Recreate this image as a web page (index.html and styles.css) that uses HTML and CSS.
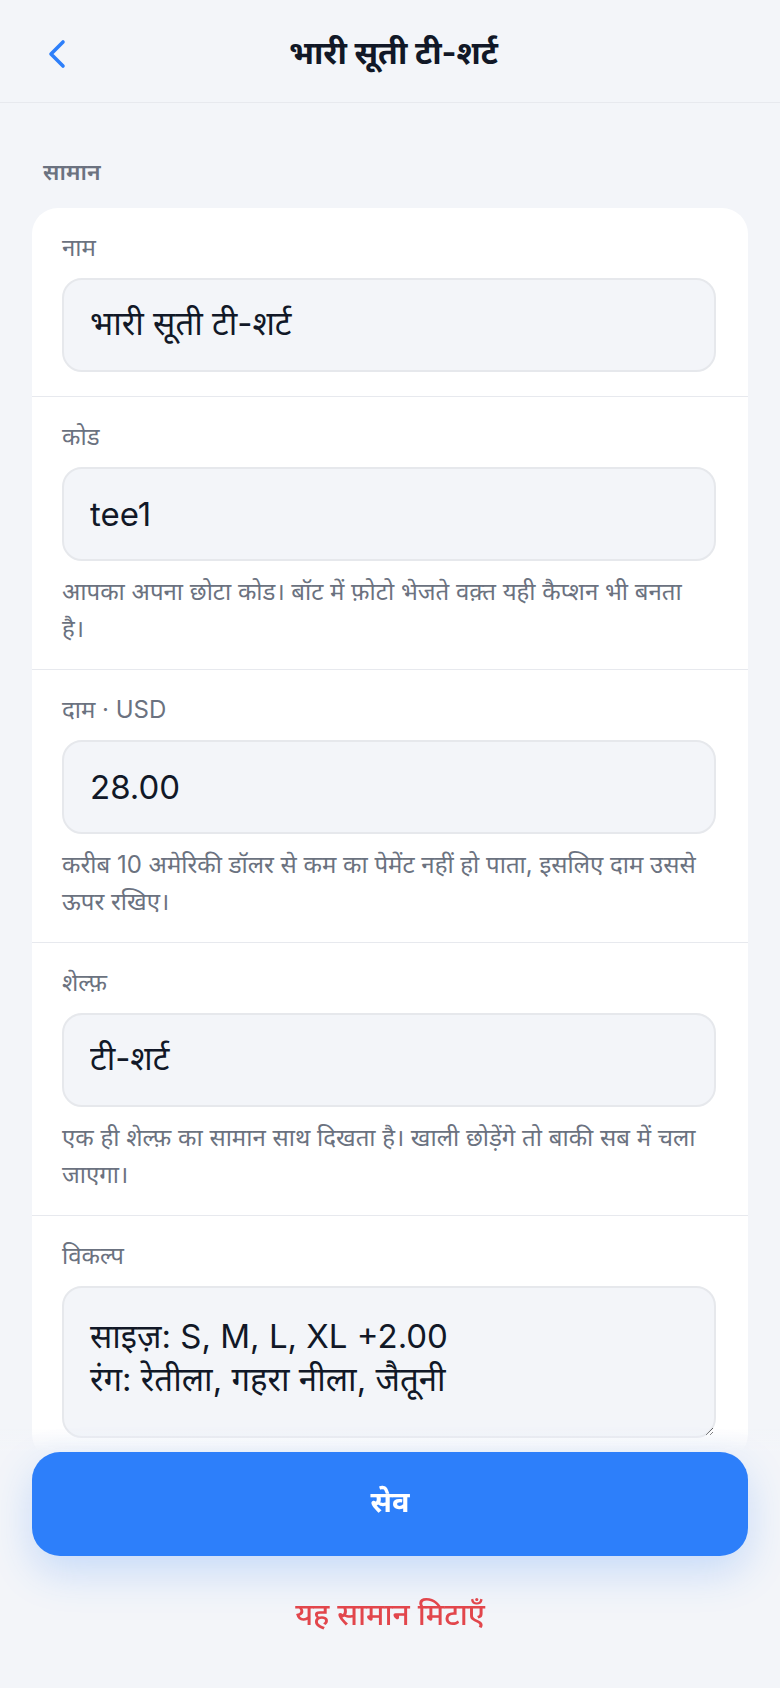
FILE: index.html
```html
<!doctype html>
<html lang="hi">
<head>
  <meta charset="utf-8"/>
  <title>भारी सूती टी-शर्ट</title>
  <meta name="viewport" content="width=device-width, initial-scale=1"/>
  <link rel="stylesheet" href="styles.css">
</head>
<body>
  <!-- top bar -->
  <header class="topbar">
    <button class="back" title="वापस">
      <svg width="20" height="30" viewBox="0 0 20 30" fill="none">
        <polyline points="16,3 4,15 16,27" stroke="currentColor" stroke-width="3.6" stroke-linecap="round" stroke-linejoin="round"/>
      </svg>
    </button>
    <h1 class="title">भारी सूती टी-शर्ट</h1>
    <span></span>
  </header>

  <!-- form -->
  <main class="page">
    <h2 class="group-label">सामान</h2>

    <section class="card">
      <div class="field">
        <label class="field-label" for="name">नाम</label>
        <input id="name" class="field-input" type="text" value="भारी सूती टी-शर्ट"/>
      </div>

      <div class="field">
        <label class="field-label" for="code">कोड</label>
        <input id="code" class="field-input" type="text" value="tee1"/>
        <p class="hint">आपका अपना छोटा कोड। बॉट में फ़ोटो भेजते वक़्त यही कैप्शन भी बनता<br>है।</p>
      </div>

      <div class="field">
        <label class="field-label" for="price">दाम · USD</label>
        <input id="price" class="field-input" type="text" value="28.00"/>
        <p class="hint">करीब 10 अमेरिकी डॉलर से कम का पेमेंट नहीं हो पाता, इसलिए दाम उससे ऊपर रखिए।</p>
      </div>

      <div class="field">
        <label class="field-label" for="shelf">शेल्फ़</label>
        <input id="shelf" class="field-input" type="text" value="टी-शर्ट"/>
        <p class="hint">एक ही शेल्फ़ का सामान साथ दिखता है। खाली छोड़ेंगे तो बाकी सब में चला जाएगा।</p>
      </div>

      <div class="field">
        <label class="field-label" for="opts">विकल्प</label>
        <textarea id="opts" class="field-input field-area">साइज़: S, M, L, XL +2.00
रंग: रेतीला, गहरा नीला, जैतूनी</textarea>
      </div>
    </section>
  </main>

  <!-- sticky actions -->
  <footer class="actions">
    <button class="save">सेव</button>
    <button class="delete">यह सामान मिटाएँ</button>
  </footer>
</body>
</html>
```

FILE: styles.css
```css
:root{
  --bg:#f3f5f9;
  --card:#fff;
  --line:#e7e9ee;
  --muted:#6b7280;
  --text:#111827;
  --blue:#2d7ffa;
  --red:#e2464c;
}
*{box-sizing:border-box;margin:0;padding:0}
html,body{background:var(--bg);color:var(--text);font-family:Inter,"Noto Sans Devanagari","Noto Sans",sans-serif}
button{font:inherit;border:none;background:none;cursor:pointer}

/* ---------- TOP BAR ---------- */
.topbar{
  height:103px;
  display:grid;
  grid-template-columns:1fr auto 1fr;
  align-items:center;
  padding:0 40px 0 47px;
  border-bottom:1px solid var(--line);
  background:var(--bg);
}
.back{color:var(--blue);display:flex;align-items:center;justify-self:start;padding-top:6px}
.title{font-size:32px;font-weight:700;line-height:40px;padding-top:4px}

/* ---------- FORM ---------- */
.page{padding:54px 32px 260px}
.group-label{font-size:23px;font-weight:600;color:var(--muted);line-height:30px;padding-left:11px;margin-bottom:21px}

.card{background:var(--card);border-radius:26px;overflow:hidden}
.field{padding:26px 32px 22px 30px}
.field:first-child{padding-bottom:24px}
.field + .field{border-top:1px solid var(--line)}
.field-label{display:block;font-size:24px;line-height:28px;color:var(--muted);margin-bottom:16px}

.field-input{
  display:block;
  width:100%;
  height:94px;
  padding:0 26px;
  border:2px solid #e6e8ec;
  border-radius:20px;
  background:var(--bg);
  font:inherit;
  font-size:33px;
  color:var(--text);
  outline:none;
}
.field-area{height:152px;padding:27px 26px;line-height:43px;resize:vertical}

.hint{margin-top:12px;font-size:24px;line-height:37px;color:var(--muted)}

/* ---------- ACTIONS ---------- */
.actions{
  position:fixed;
  left:0;right:0;bottom:0;
  padding:24px 32px 52px;
  background:linear-gradient(to bottom,rgba(243,245,249,0),var(--bg) 24px);
  display:flex;
  flex-direction:column;
}
.save{
  height:104px;
  border-radius:28px;
  background:var(--blue);
  color:#fff;
  font-size:29px;
  font-weight:700;
  box-shadow:0 16px 40px rgba(45,127,250,.22);
}
.delete{margin-top:40px;height:40px;font-size:30px;font-weight:500;color:var(--red)}
```
